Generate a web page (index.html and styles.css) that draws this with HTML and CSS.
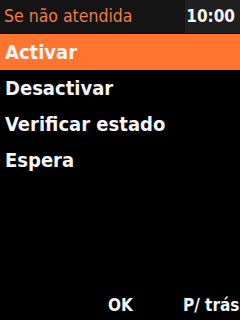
FILE: index.html
```html
<!DOCTYPE html>
<html>
    <head>
        <meta charset="utf-8">
        <title>Se não atendida</title>
        <link rel="stylesheet" href="styles.css">
    </head>
    <body>
        <div id="screen">
            <div id="header">
                <div id="title">Se não atendida</div>
                <div id="clock">10:00</div>
            </div>
            <div id="menu">
                <div class="item selected">Activar</div>
                <div class="item">Desactivar</div>
                <div class="item">Verificar estado</div>
                <div class="item">Espera</div>
            </div>
            <div id="softkeys">
                <div class="softkey left"></div>
                <div class="softkey middle">OK</div>
                <div class="softkey right">P/ trás</div>
            </div>
        </div>
    </body>
</html>
```

FILE: styles.css
```css
body {
    background: #000000;
    padding: 0;
    margin: 0;
    overflow: hidden;
}

#screen {
    width: 240px;
    height: 320px;
    display: flex;
    flex-direction: column;
    font-family: "DejaVu Sans Condensed", "DejaVu Sans", sans-serif;
    color: #f4f4f4;
}

#header {
    height: 33px;
    display: flex;
    align-items: stretch;
    justify-content: space-between;
    background: #141414;
    border-bottom: 1px solid #0a0a0a;
}

#title {
    padding-left: 4px;
    line-height: 32px;
    font-size: 17.5px;
    color: #ef7b48;
}

#clock {
    width: 50px;
    padding-right: 5px;
    line-height: 32px;
    text-align: right;
    font-size: 17px;
    font-weight: bold;
    background: #1f1f1f;
}

#menu {
    flex: 1;
    display: flex;
    flex-direction: column;
}

.item {
    height: 36px;
    line-height: 36px;
    padding-left: 5px;
    font-size: 20px;
    font-weight: bold;
}

.item.selected {
    background: #ff7530;
}

#softkeys {
    height: 30px;
    display: flex;
    align-items: center;
}

.softkey {
    font-size: 17px;
    font-weight: bold;
}

.left { width: 108px; }
.middle { width: 75px; }
.right { flex: 1; }
```
